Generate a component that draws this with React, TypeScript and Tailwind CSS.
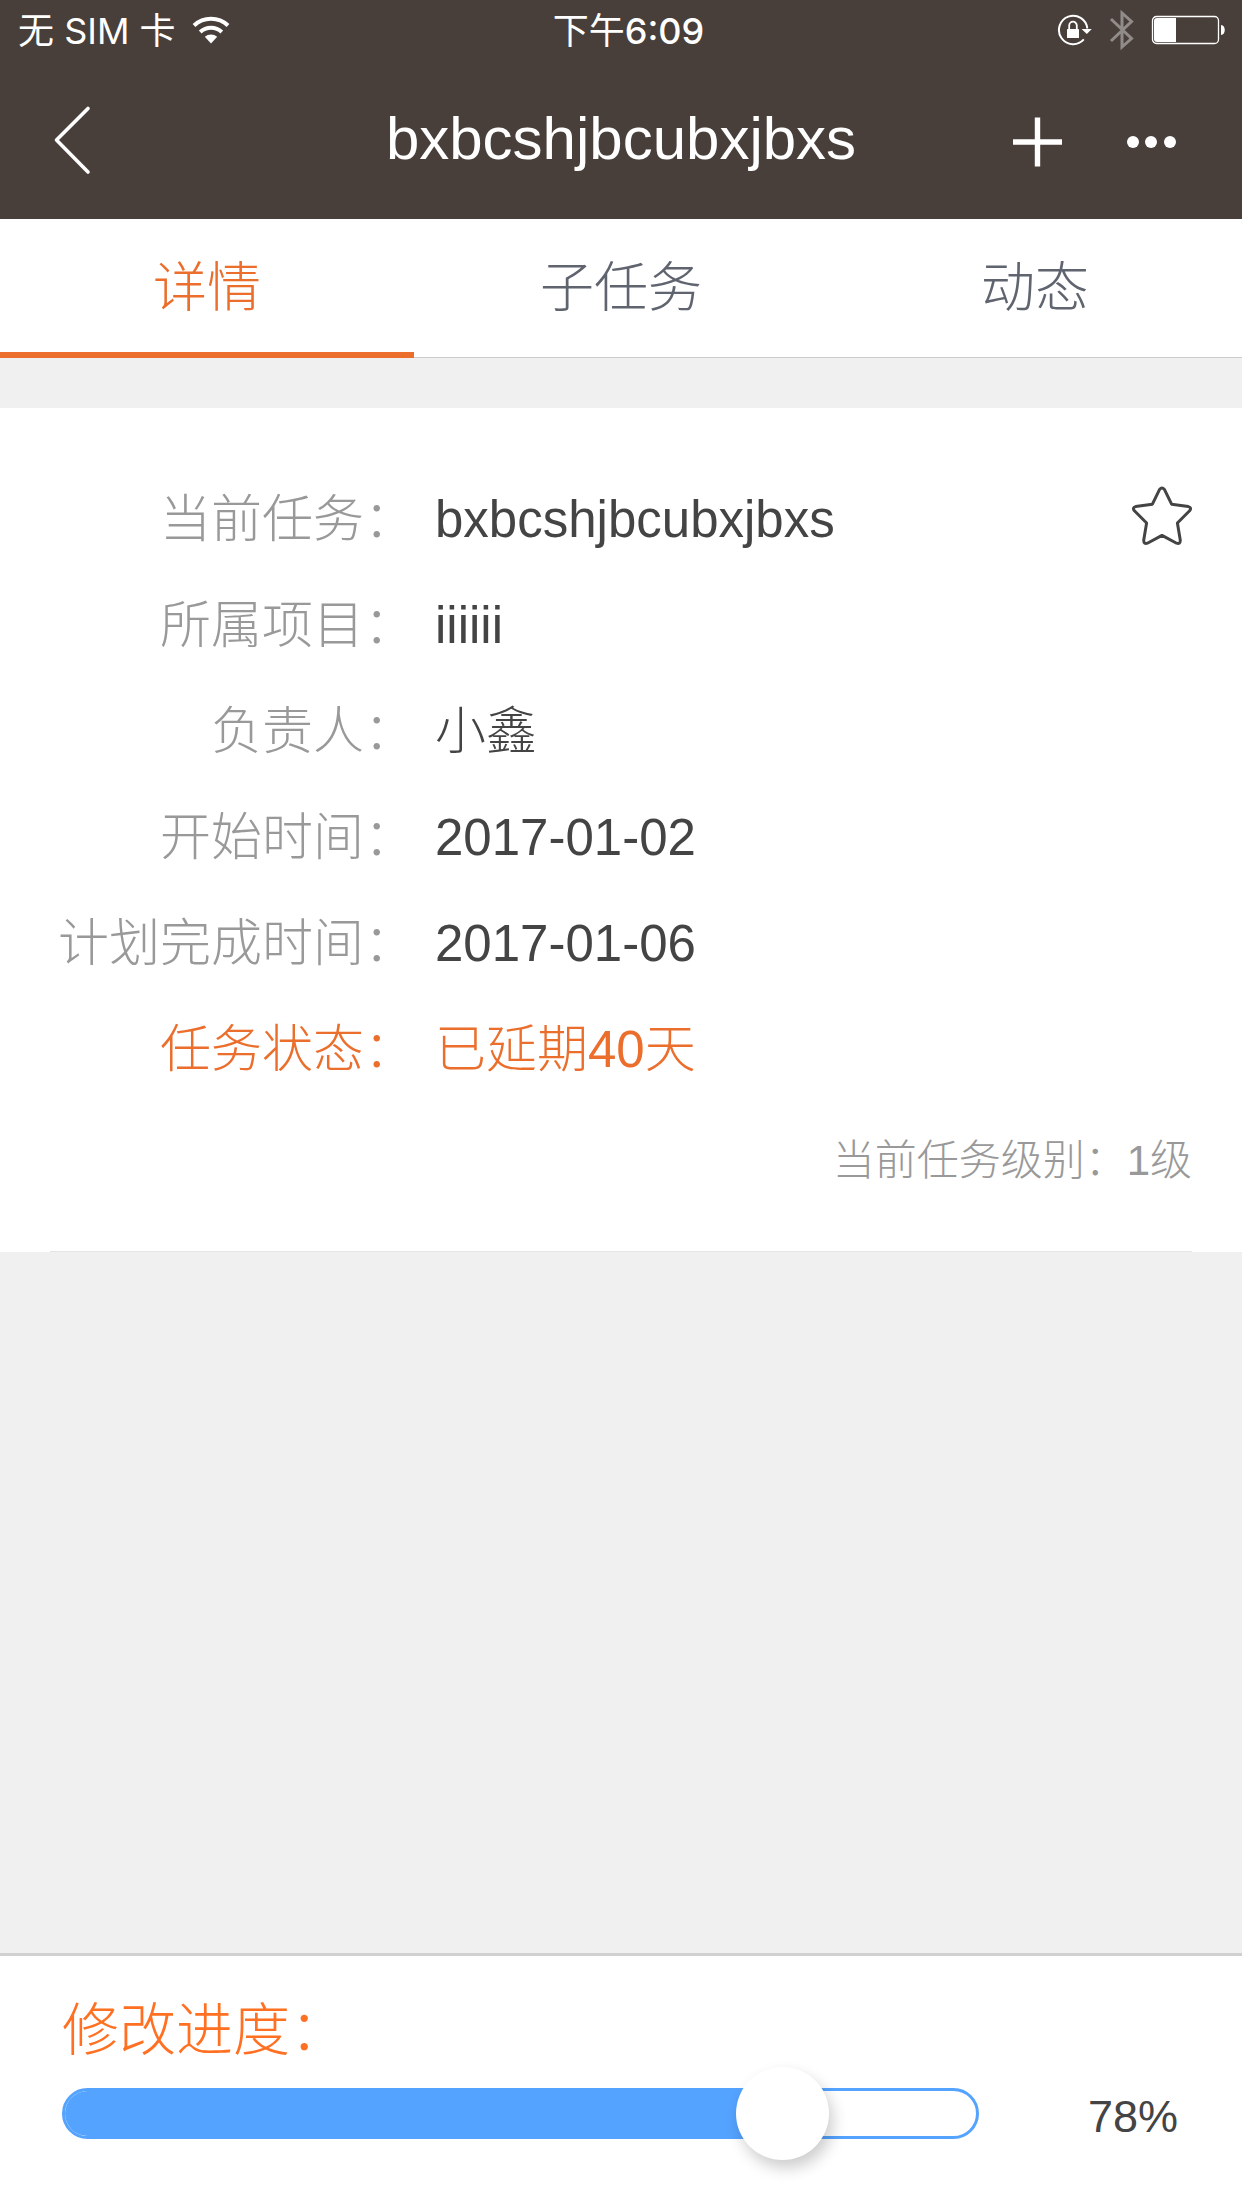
import { useState } from "react";

const SANS = "font-['Liberation_Sans','Noto_Sans_CJK_SC',sans-serif]";

const details = [
  { label: "当前任务：", value: "bxbcshjbcubxjbxs" },
  { label: "所属项目：", value: "iiiiii" },
  { label: "负责人：", value: "小鑫" },
  { label: "开始时间：", value: "2017-01-02" },
  { label: "计划完成时间：", value: "2017-01-06" },
  { label: "任务状态：", value: "已延期40天", late: true },
];

const tabs = ["详情", "子任务", "动态"];

function WifiIcon() {
  return (
    <svg className="h-[28px] w-[38px]" viewBox="0 0 38 28" fill="none" stroke="#fff" strokeWidth="4">
      <path d="M2 9.5 A25 25 0 0 1 36 9.5" />
      <path d="M8.2 16 A16 16 0 0 1 29.8 16" />
      <path d="M19 27.5 L12.8 20.8 A9.5 9.5 0 0 1 25.2 20.8 Z" fill="#fff" stroke="none" />
    </svg>
  );
}

function RotationLockIcon() {
  return (
    <svg className="h-[32px] w-[36px]" viewBox="0 0 36 32" fill="none">
      <path d="M30.3 14.5 A14.2 14.2 0 1 0 26.8 25.4" stroke="#fff" strokeWidth="2" />
      <path d="M24.6 15 H34.8 L29.8 20 Z" fill="#fff" />
      <rect x="10" y="15" width="12" height="9" rx="0.6" fill="#fff" />
      <path d="M12.2 15.5 V11.5 A3.8 3.8 0 0 1 19.8 11.5 V15.5" stroke="#fff" strokeWidth="1.8" />
    </svg>
  );
}

function BluetoothIcon() {
  return (
    <svg className="h-[42px] w-[26px]" viewBox="0 0 26 42" fill="none" stroke="#918c89" strokeWidth="3">
      <path d="M2 10 L22.5 29.5 L13 38 V4 L22.5 12.5 L2 32" />
    </svg>
  );
}

function BatteryIcon() {
  return (
    <svg className="h-[30px] w-[76px]" viewBox="0 0 76 30" fill="none">
      <rect x="1.5" y="1.5" width="66" height="27" rx="4" stroke="#fff" strokeWidth="1.3" />
      <path d="M25 3 V27 H6 A3 3 0 0 1 3 24 V6 A3 3 0 0 1 6 3 Z" fill="#fff" />
      <path d="M70 10 C75 10 75 20 70 20 Z" fill="#fff" />
    </svg>
  );
}

function StatusBar() {
  return (
    <div className="flex h-[60px] items-center pl-[18px] pr-[15px] font-['Inter','Noto_Sans_CJK_SC',sans-serif] text-[36px] leading-[60px]">
      <div className="flex flex-1 items-center gap-4">
        <span className="pt-px">无 SIM 卡</span>
        <WifiIcon />
      </div>
      <time className="pl-3 pt-px">
        下午<span className="font-medium">6:09</span>
      </time>
      <div className="flex flex-1 items-center justify-end gap-4">
        <RotationLockIcon />
        <BluetoothIcon />
        <BatteryIcon />
      </div>
    </div>
  );
}

function NavBar() {
  return (
    <nav className="grid h-[159px] grid-cols-[1fr_auto_1fr] items-center">
      <button type="button" aria-label="返回" className="ml-12 w-12">
        <svg className="h-[70px] w-12" viewBox="0 0 48 70" fill="none" stroke="#fff" strokeWidth="3.6" strokeLinecap="round" strokeLinejoin="round">
          <path d="M40 3.5 L8.5 35 L40 67" />
        </svg>
      </button>
      <h1 className="pb-[2px] text-[60px] leading-[72px]">bxbcshjbcubxjbxs</h1>
      <div className="mr-14 flex items-center justify-end gap-14">
        <button type="button" aria-label="添加">
          <svg className="h-[56px] w-[56px]" viewBox="0 0 56 56" stroke="#fff" strokeWidth="5.4">
            <path d="M27.5 5.5 V54.5 M3 30 H52" />
          </svg>
        </button>
        <button type="button" aria-label="更多">
          <svg className="h-[56px] w-[64px]" viewBox="0 0 64 56" fill="#fff">
            <circle cx="11" cy="30" r="6" />
            <circle cx="29" cy="30" r="6" />
            <circle cx="48" cy="30" r="6" />
          </svg>
        </button>
      </div>
    </nav>
  );
}

function Tabs() {
  const [active, setActive] = useState(0);
  return (
    <div role="tablist" className="grid h-[139px] grid-cols-3 bg-white text-[54px] font-light leading-[64px]">
      {tabs.map((name, i) => (
        <button
          key={name}
          type="button"
          role="tab"
          aria-selected={i === active}
          onClick={() => setActive(i)}
          className={
            i === active
              ? "border-b-[6px] border-[#eb6e2c] pt-[5px] text-[#eb6e2c]"
              : "border-b border-[#cccccc] text-[#5f646e]"
          }
        >
          {name}
        </button>
      ))}
    </div>
  );
}

function Details() {
  return (
    <section className="relative bg-white pt-[59px] pb-[51px]">
      <dl className="text-[51px] font-light leading-[106px]">
        {details.map((row) => (
          <div key={row.label} className={row.late ? "flex gap-5 text-[#eb6e2c]" : "flex gap-5 text-[#444444]"}>
            <dt className={row.late ? "w-[415px] text-right" : "w-[415px] text-right text-[#999999]"}>{row.label}</dt>
            <dd>{row.value}</dd>
          </div>
        ))}
      </dl>
      <p className="pr-[50px] pt-[18px] text-right text-[42px] font-light leading-[80px] text-[#999999]">
        当前任务级别：1级
      </p>
      <button type="button" aria-label="收藏" className="absolute right-[50px] top-[78px]">
        <svg className="h-[60px] w-[60px]" viewBox="0 0 60 60" fill="none" stroke="#444" strokeWidth="3" strokeLinejoin="round">
          <path d="M27.6 3.4 Q30 0.4 32.4 3.4 L39.6 18.2 L56.4 20.6 Q60 21.6 57.6 24.8 L45.4 37 L48.3 54.2 Q48.2 58.6 44.6 57.2 L30 49.4 L15.4 57.2 Q11.8 58.6 11.7 54.2 L14.6 37 L2.4 24.8 Q0 21.6 3.6 20.6 L20.4 18.2 Z" />
        </svg>
      </button>
      <hr className="absolute bottom-0 left-[50px] right-[50px] border-t border-[#e5e5e5]" />
    </section>
  );
}

function ProgressEditor() {
  const [value, setValue] = useState(78);
  return (
    <footer className="border-t-[3px] border-[#d0d0d0] bg-white pb-12 pl-[62px] pr-16 pt-[37px]">
      <label htmlFor="progress" className="block text-[57px] font-light leading-[74px] text-[#ff7022]">
        修改进度：
      </label>
      <div className="flex h-[93px] items-center">
        <div className="relative h-[51px] flex-1">
          <div className="h-full overflow-hidden rounded-full border-[3px] border-[#54a3ff]">
            <div className="h-full bg-[#54a3ff]" style={{ width: `${value}%` }} />
          </div>
          <input
            id="progress"
            type="range"
            min={0}
            max={100}
            value={value}
            onChange={(e) => setValue(Number(e.target.value))}
            className="absolute inset-y-0 -left-14 w-[calc(100%+112px)] appearance-none bg-transparent outline-none [&::-webkit-slider-thumb]:h-[93px] [&::-webkit-slider-thumb]:w-[93px] [&::-webkit-slider-thumb]:appearance-none [&::-webkit-slider-thumb]:rounded-full [&::-webkit-slider-thumb]:bg-white [&::-webkit-slider-thumb]:shadow-[4px_8px_15px_rgba(0,0,0,0.2)]"
          />
        </div>
        <output htmlFor="progress" className="w-[199px] pt-[6px] text-right text-[45px] leading-[60px] text-[#444444]">
          {value}%
        </output>
      </div>
    </footer>
  );
}

export default function App() {
  return (
    <div className={`flex min-h-screen flex-col bg-[#f0f0f0] ${SANS}`}>
      <header className="bg-[#483f3a] text-white">
        <StatusBar />
        <NavBar />
      </header>
      <Tabs />
      <main className="flex-1 pt-[50px]">
        <Details />
      </main>
      <ProgressEditor />
    </div>
  );
}
